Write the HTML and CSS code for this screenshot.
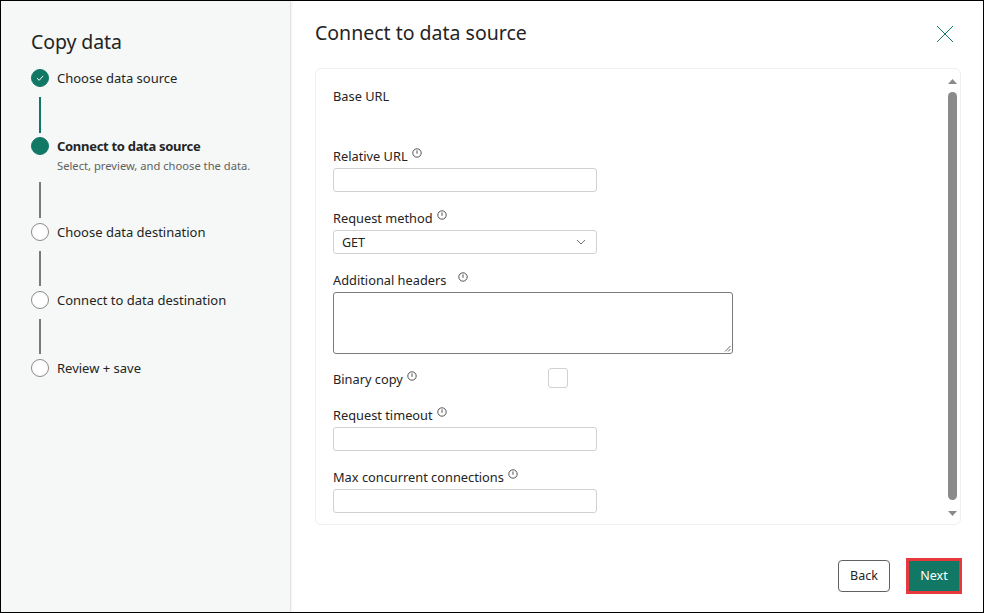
FILE: index.html
```html
<!DOCTYPE html>
<html>
<head>
<meta charset="utf-8">
<link rel="stylesheet" href="styles.css">
</head>
<body>
<div class="frame">
  <aside class="sidebar">
    <h1 class="side-title">Copy data</h1>
    <ol class="steps">
      <li class="step done">
        <span class="dot"><svg width="10" height="10" viewBox="0 0 10 10"><path d="M2 5.2 L4.2 7.3 L8.2 2.8" fill="none" stroke="#fff" stroke-width="1"/></svg></span>
        <div class="step-text"><span class="step-name">Choose data source</span></div>
      </li>
      <li class="connector active"></li>
      <li class="step current">
        <span class="dot"></span>
        <div class="step-text">
          <span class="step-name">Connect to data source</span>
          <span class="step-sub">Select, preview, and choose the data.</span>
        </div>
      </li>
      <li class="connector after-current"></li>
      <li class="step">
        <span class="dot"></span>
        <div class="step-text"><span class="step-name">Choose data destination</span></div>
      </li>
      <li class="connector"></li>
      <li class="step">
        <span class="dot"></span>
        <div class="step-text"><span class="step-name">Connect to data destination</span></div>
      </li>
      <li class="connector"></li>
      <li class="step">
        <span class="dot"></span>
        <div class="step-text"><span class="step-name">Review + save</span></div>
      </li>
    </ol>
  </aside>
  <main class="main">
    <header class="main-head">
      <h2 class="main-title">Connect to data source</h2>
      <button class="close" aria-label="Close"><svg width="18" height="18" viewBox="0 0 18 18"><path d="M1 1 L17 17 M17 1 L1 17" stroke="#117865" stroke-width="1" fill="none"/></svg></button>
    </header>
    <section class="card">
      <div class="form">
        <div class="label base">Base URL</div>

        <div class="label">Relative URL <svg class="info" width="10" height="10" viewBox="0 0 10 10"><circle cx="5" cy="5" r="4.2" fill="none" stroke="#424242" stroke-width="0.9"/><path d="M5 2.4 V5.8" stroke="#424242" stroke-width="0.9"/></svg></div>
        <div class="input"></div>

        <div class="label">Request method <svg class="info" width="10" height="10" viewBox="0 0 10 10"><circle cx="5" cy="5" r="4.2" fill="none" stroke="#424242" stroke-width="0.9"/><path d="M5 2.4 V5.8" stroke="#424242" stroke-width="0.9"/></svg></div>
        <div class="input select"><span>GET</span><svg width="10" height="6" viewBox="0 0 10 6"><path d="M1 1 L5 5 L9 1" fill="none" stroke="#616161" stroke-width="0.9"/></svg></div>

        <div class="label">Additional headers <svg class="info wide" width="10" height="10" viewBox="0 0 10 10"><circle cx="5" cy="5" r="4.2" fill="none" stroke="#424242" stroke-width="0.9"/><path d="M5 2.4 V5.8" stroke="#424242" stroke-width="0.9"/></svg></div>
        <div class="textarea"><svg class="grip" width="7" height="7" viewBox="0 0 7 7"><path d="M6.5 1 L1 6.5 M6.5 4 L4 6.5" stroke="#555" stroke-width="0.9"/></svg></div>

        <div class="check-row">
          <div class="label inline">Binary copy <svg class="info" width="10" height="10" viewBox="0 0 10 10"><circle cx="5" cy="5" r="4.2" fill="none" stroke="#424242" stroke-width="0.9"/><path d="M5 2.4 V5.8" stroke="#424242" stroke-width="0.9"/></svg></div>
          <span class="checkbox"></span>
        </div>

        <div class="label">Request timeout <svg class="info" width="10" height="10" viewBox="0 0 10 10"><circle cx="5" cy="5" r="4.2" fill="none" stroke="#424242" stroke-width="0.9"/><path d="M5 2.4 V5.8" stroke="#424242" stroke-width="0.9"/></svg></div>
        <div class="input"></div>

        <div class="label">Max concurrent connections <svg class="info" width="10" height="10" viewBox="0 0 10 10"><circle cx="5" cy="5" r="4.2" fill="none" stroke="#424242" stroke-width="0.9"/><path d="M5 2.4 V5.8" stroke="#424242" stroke-width="0.9"/></svg></div>
        <div class="input"></div>
      </div>
      <div class="scrollbar">
        <svg class="arrow" width="9" height="5" viewBox="0 0 9 5"><path d="M0 5 L4.5 0 L9 5 Z" fill="#8a8a8a"/></svg>
        <div class="thumb"></div>
        <svg class="arrow" width="9" height="5" viewBox="0 0 9 5"><path d="M0 0 L4.5 5 L9 0 Z" fill="#8a8a8a"/></svg>
      </div>
    </section>
    <footer class="main-foot">
      <button class="btn back">Back</button>
      <button class="btn next">Next</button>
    </footer>
  </main>
</div>
</body>
</html>
```

FILE: styles.css
```css
* { box-sizing: border-box; }
html, body { margin: 0; padding: 0; }
body {
  font-family: "Noto Sans", "Open Sans", sans-serif;
  color: #242424;
  background: #fff;
}
.frame {
  width: 984px;
  height: 613px;
  border: 1px solid #000;
  display: flex;
  overflow: hidden;
}
.sidebar {
  width: 290px;
  flex: none;
  background: #f5f8f6;
  border-right: 1px solid #e3e3e3;
  box-shadow: 1px 0 2px rgba(0,0,0,0.06);
  padding: 28px 0 0 30px;
}
.side-title {
  margin: 0;
  font-size: 19.5px;
  font-weight: 400;
  line-height: 26px;
  letter-spacing: -0.1px;
}
.steps {
  list-style: none;
  margin: 14px 0 0;
  padding: 0;
}
.step {
  display: flex;
  align-items: flex-start;
  gap: 8px;
}
.dot {
  width: 18px;
  height: 18px;
  border-radius: 50%;
  border: 1px solid #8a8a8a;
  flex: none;
  display: flex;
  align-items: center;
  justify-content: center;
  background: #fff;
}
.step.done .dot, .step.current .dot {
  background: #117865;
  border-color: #117865;
}
.step-text {
  display: flex;
  flex-direction: column;
}
.step-name {
  font-size: 13px;
  line-height: 18px;
}
.step.current .step-name { font-weight: 700; letter-spacing: -0.3px; }
.step-sub {
  font-size: 11.2px;
  line-height: 16px;
  color: #616161;
  margin-top: 3px;
}
.connector {
  width: 2px;
  height: 35px;
  margin: 10px 0 5px 8px;
  background: #7a7a7a;
}
.connector.active {
  background: #117865;
  height: 36px;
  margin-bottom: 4px;
}
.connector.after-current {
  height: 36px;
  margin-top: 8px;
  margin-bottom: 5px;
}

.main {
  flex: 1;
  display: flex;
  flex-direction: column;
  padding: 18px 21px 0 24px;
}
.main-head {
  display: flex;
  align-items: center;
  justify-content: space-between;
  height: 28px;
}
.main-title {
  margin: 0;
  font-size: 19.5px;
  font-weight: 400;
  line-height: 28px;
  letter-spacing: 0;
}
.close {
  border: 0;
  background: none;
  padding: 0;
  width: 18px;
  height: 18px;
  margin-right: 8px;
  margin-top: 2px;
  display: flex;
}
.card {
  margin-top: 21px;
  height: 457px;
  border: 1px solid #efefef;
  border-radius: 6px;
  display: flex;
  margin-right: 1px;
}
.form {
  flex: 1;
  padding: 18px 0 0 17px;
  display: flex;
  flex-direction: column;
  align-items: flex-start;
}
.label {
  font-size: 12.8px;
  line-height: 18px;
  display: flex;
  align-items: flex-start;
  gap: 4px;
  margin-top: 17px;
}
.label.base { margin-top: 0; margin-bottom: 25px; }
.label + .input, .label + .textarea { margin-top: 3px; }
.label .info { margin-top: 1px; }
.label .info.wide { margin-left: 8px; }
.input {
  width: 264px;
  height: 24px;
  border: 1px solid #d1d1d1;
  border-radius: 3px;
  background: #fff;
}
.select {
  display: flex;
  align-items: center;
  justify-content: space-between;
  padding: 0 10px 0 8px;
  font-size: 12.5px;
}
.textarea {
  width: 400px;
  height: 62px;
  border: 1px solid #7a7a7a;
  border-radius: 3px;
  position: relative;
}
.grip { position: absolute; right: 1px; bottom: 1px; }
.check-row {
  display: flex;
  align-items: center;
  margin-top: 14px;
  width: 264px;
}
.check-row .label { margin-top: 2px; width: 215px; }
.checkbox {
  width: 20px;
  height: 20px;
  border: 1px solid #d1d1d1;
  border-radius: 3px;
  background: #fff;
}
.check-row + .label { margin-top: 18px; }
.scrollbar {
  width: 12px;
  flex: none;
  display: flex;
  flex-direction: column;
  align-items: center;
  padding: 10px 3px 8px 0;
}
.arrow { flex: none; }
.thumb {
  flex: 1;
  width: 9px;
  background: #8a8a8a;
  border-radius: 5px;
  margin: 8px 0 11px;
}
.main-foot {
  flex: 1;
  display: flex;
  justify-content: flex-end;
  align-items: center;
  gap: 16px;
  padding-top: 14px;
}
.btn {
  font-family: "Noto Sans", "Open Sans", sans-serif;
  font-size: 12.5px;
  border-radius: 4px;
  cursor: pointer;
}
.back {
  width: 52px;
  height: 32px;
  background: #fff;
  border: 1px solid #616161;
  color: #242424;
}
.next {
  width: 56px;
  height: 36px;
  background: #117865;
  border: 3px solid #e8383d;
  border-radius: 0;
  color: #fff;
}
```
